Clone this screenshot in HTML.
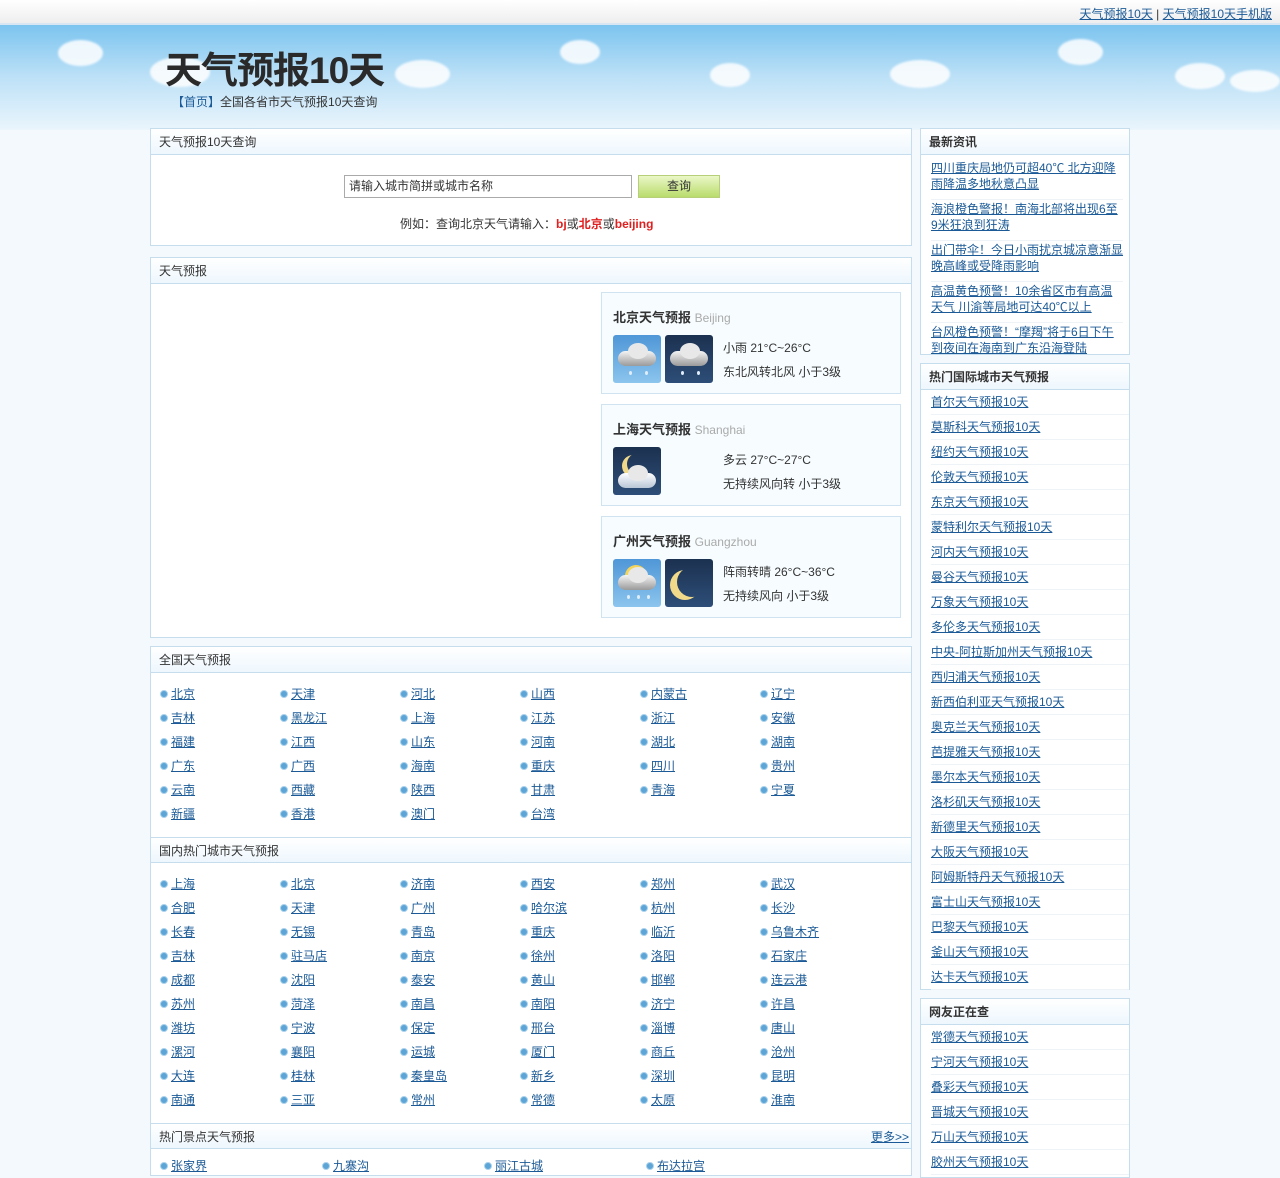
<!DOCTYPE html>
<html><head><meta charset="utf-8"><style>
*{margin:0;padding:0;box-sizing:border-box}
body{width:1280px;height:1167px;overflow:hidden;background:#f4f9fd;font-family:"Liberation Sans","Noto Sans CJK SC",sans-serif;font-size:12px;color:#333;position:relative}
a{color:#1b5a96;text-decoration:underline}
.abs{position:absolute}
.top{position:absolute;left:0;top:0;width:1280px;height:25px;background:linear-gradient(#fff,#eee);border-bottom:2px solid #d7e6f2}
.sky{position:absolute;left:0;top:25px;width:1280px;height:105px;background:linear-gradient(#7cc4ef,#bde1f7 50%,#eaf5fc)}
.cloud{position:absolute;background:#fff;border-radius:50%;opacity:.85;filter:blur(1px)}
.box{position:absolute;background:#fff;border:1px solid #c6ddee}
.hd{position:absolute;left:0;right:0;top:0;height:26px;line-height:26px;padding-left:8px;background:linear-gradient(#fff,#eef7fd);border-bottom:1px solid #c6ddee;color:#333}
.li{position:absolute;white-space:nowrap;line-height:14px}
.li i{display:inline-block;width:8px;height:8px;border-radius:50%;background:#5ca5d6;border:1px solid #a9d1ec;margin-right:3px;vertical-align:0}
.card{position:absolute;left:450px;width:300px;background:#f7fcff;border:1px solid #cfe3f1}
.card h3{position:absolute;left:11px;top:14px;font-size:13px;font-weight:bold;color:#333}
.card h3 span{font-weight:normal;color:#aaa;font-size:12px}
.ic{position:absolute;top:42px;width:48px;height:48px;border-radius:3px;overflow:hidden}
.day{background:linear-gradient(#4f97d7,#8cc5ee)}
.night{background:linear-gradient(#1c3150,#2d4e78)}
.cl{position:absolute;left:5px;top:16px;width:38px;height:15px;border-radius:8px;background:linear-gradient(#f4f4f4,#9a9a9a)}
.cl:before{content:"";position:absolute;left:10px;top:-8px;width:20px;height:16px;border-radius:50%;background:#e8e8e8}
.dr{position:absolute;top:36px;width:3px;height:4px;border-radius:50%;background:#dfeefa}
.ct{position:absolute;left:121px;top:43px;line-height:24px;font-size:12px;color:#333}
.rl{position:absolute;left:10px;right:0;height:25px;line-height:25px;border-bottom:1px solid #eef3f7;white-space:nowrap}
</style></head><body>
<div class="top"></div>
<div class="abs" style="right:8px;top:5px;font-size:12px"><a href="#">天气预报10天</a> | <a href="#">天气预报10天手机版</a></div>
<div class="sky">
<div class="cloud" style="left:58px;top:15px;width:45px;height:26px"></div>
<div class="cloud" style="left:150px;top:32px;width:60px;height:30px"></div>
<div class="cloud" style="left:395px;top:35px;width:55px;height:28px"></div>
<div class="cloud" style="left:560px;top:15px;width:40px;height:24px"></div>
<div class="cloud" style="left:710px;top:38px;width:40px;height:24px"></div>
<div class="cloud" style="left:890px;top:35px;width:60px;height:28px"></div>
<div class="cloud" style="left:1058px;top:14px;width:45px;height:26px"></div>
<div class="cloud" style="left:1175px;top:38px;width:50px;height:26px"></div>
<div class="cloud" style="left:1230px;top:45px;width:50px;height:22px"></div>
</div>
<div class="abs" style="left:165px;top:47px;font-size:37px;font-weight:bold;color:#2a2a2a;letter-spacing:-1px;line-height:48px">天气预报10天</div>
<div class="abs" style="left:172px;top:93px;font-size:12px;color:#333"><span style="color:#1b5a96">【首页】</span>全国各省市天气预报10天查询</div>

<div class="box" style="left:150px;top:128px;width:762px;height:118px">
<div class="hd">天气预报10天查询</div>
<div class="abs" style="left:193px;top:46px;width:288px;height:23px;border:1px solid #aaa;background:#fff;line-height:21px;padding-left:4px">请输入城市简拼或城市名称</div>
<div class="abs" style="left:487px;top:46px;width:82px;height:23px;border:1px solid #b6cf78;background:linear-gradient(#eaf7c7,#b9dc6d);text-align:center;line-height:21px">查询</div>
<div class="abs" style="left:249px;top:86px">例如：查询北京天气请输入：<b style="color:#e02020">bj</b>或<b style="color:#e02020">北京</b>或<b style="color:#e02020">beijing</b></div>
</div>

<div class="box" style="left:150px;top:257px;width:762px;height:381px">
<div class="hd">天气预报</div>
<div class="card" style="top:34px;height:102px"><h3>北京天气预报 <span>Beijing</span></h3>
<div class="ic day" style="left:11px"><div class="cl"></div><div class="dr" style="left:16px"></div><div class="dr" style="left:32px"></div></div><div class="ic night" style="left:63px"><div class="cl"></div><div class="dr" style="left:16px"></div><div class="dr" style="left:32px"></div></div>
<div class="ct">小雨 21°C~26°C<br>东北风转北风 小于3级</div></div>
<div class="card" style="top:146px;height:102px"><h3>上海天气预报 <span>Shanghai</span></h3>
<div class="ic night" style="left:11px"><div style="position:absolute;left:14px;top:6px;width:22px;height:22px;border-radius:50%;box-shadow:-5px 2px 0 #f1d98a"></div><div class="cl" style="top:26px;background:linear-gradient(#fff,#b9c6d6)"></div></div>
<div class="ct">多云 27°C~27°C<br>无持续风向转 小于3级</div></div>
<div class="card" style="top:258px;height:102px"><h3>广州天气预报 <span>Guangzhou</span></h3>
<div class="ic day" style="left:11px"><div style="position:absolute;left:12px;top:6px;width:22px;height:22px;border-radius:50%;background:#f5d45a"></div><div class="cl"></div><div class="dr" style="left:14px"></div><div class="dr" style="left:24px"></div><div class="dr" style="left:34px"></div></div><div class="ic night" style="left:63px"><div style="position:absolute;left:12px;top:8px;width:30px;height:30px;border-radius:50%;box-shadow:-7px 3px 0 #f1d98a"></div></div>
<div class="ct">阵雨转晴 26°C~36°C<br>无持续风向 小于3级</div></div>
</div>

<div class="box" style="left:150px;top:646px;width:762px;height:530px">
<div class="hd">全国天气预报</div>
<div class="hd" style="top:190px;border-top:1px solid #c6ddee">国内热门城市天气预报</div>
<div class="hd" style="top:476px;border-top:1px solid #c6ddee">热门景点天气预报<a href="#" style="position:absolute;right:2px">更多&gt;&gt;</a></div>
</div>
<div id="g"></div>

<div class="box" style="left:920px;top:128px;width:210px;height:227px">
<div class="hd" style="font-weight:bold">最新资讯</div>
<div class="abs" style="left:10px;top:30px;width:192px;line-height:16px">
<div style="height:41px;border-bottom:1px solid #eef3f7;padding-top:1px"><a href="#">四川重庆局地仍可超40℃ 北方迎降雨降温多地秋意凸显</a></div>
<div style="height:41px;border-bottom:1px solid #eef3f7;padding-top:1px"><a href="#">海浪橙色警报！南海北部将出现6至9米狂浪到狂涛</a></div>
<div style="height:41px;border-bottom:1px solid #eef3f7;padding-top:1px"><a href="#">出门带伞！今日小雨扰京城凉意渐显晚高峰或受降雨影响</a></div>
<div style="height:41px;border-bottom:1px solid #eef3f7;padding-top:1px"><a href="#">高温黄色预警！10余省区市有高温天气 川渝等局地可达40℃以上</a></div>
<div style="height:41px;padding-top:1px"><a href="#">台风橙色预警！“摩羯”将于6日下午到夜间在海南到广东沿海登陆</a></div>
</div></div>
<div class="box" style="left:920px;top:363px;width:210px;height:627px">
<div class="hd" style="font-weight:bold">热门国际城市天气预报</div>
<div id="intl"></div></div>
<div class="box" style="left:920px;top:998px;width:210px;height:180px">
<div class="hd" style="font-weight:bold">网友正在查</div>
<div id="ny"></div></div>

<script>
function grid(rows,y0,x0,dx){var h='';rows.forEach(function(r,i){r.split(' ').forEach(function(c,j){h+='<div class="li" style="left:'+(x0+j*dx)+'px;top:'+(y0+i*24-7)+'px"><i></i><a href="#">'+c+'</a></div>'})});return h}
var g=grid(["北京 天津 河北 山西 内蒙古 辽宁","吉林 黑龙江 上海 江苏 浙江 安徽","福建 江西 山东 河南 湖北 湖南","广东 广西 海南 重庆 四川 贵州","云南 西藏 陕西 甘肃 青海 宁夏","新疆 香港 澳门 台湾"],694,160,120);
g+=grid(["上海 北京 济南 西安 郑州 武汉","合肥 天津 广州 哈尔滨 杭州 长沙","长春 无锡 青岛 重庆 临沂 乌鲁木齐","吉林 驻马店 南京 徐州 洛阳 石家庄","成都 沈阳 泰安 黄山 邯郸 连云港","苏州 菏泽 南昌 南阳 济宁 许昌","潍坊 宁波 保定 邢台 淄博 唐山","漯河 襄阳 运城 厦门 商丘 沧州","大连 桂林 秦皇岛 新乡 深圳 昆明","南通 三亚 常州 常德 太原 淮南"],884,160,120);
g+=grid(["张家界 九寨沟 丽江古城 布达拉宫"],1166,160,162);
document.getElementById('g').innerHTML=g;
function rl(list,el){var h='';list.forEach(function(c,i){h+='<div class="rl" style="top:'+(26+i*25)+'px"><a href="#">'+c+'天气预报10天</a></div>'});document.getElementById(el).innerHTML=h}
rl("首尔 莫斯科 纽约 伦敦 东京 蒙特利尔 河内 曼谷 万象 多伦多 中央-阿拉斯加州 西归浦 新西伯利亚 奥克兰 芭提雅 墨尔本 洛杉矶 新德里 大阪 阿姆斯特丹 富士山 巴黎 釜山 达卡".split(' '),'intl');
rl("常德 宁河 叠彩 晋城 万山 胶州".split(' '),'ny');
</script>
</body></html>
